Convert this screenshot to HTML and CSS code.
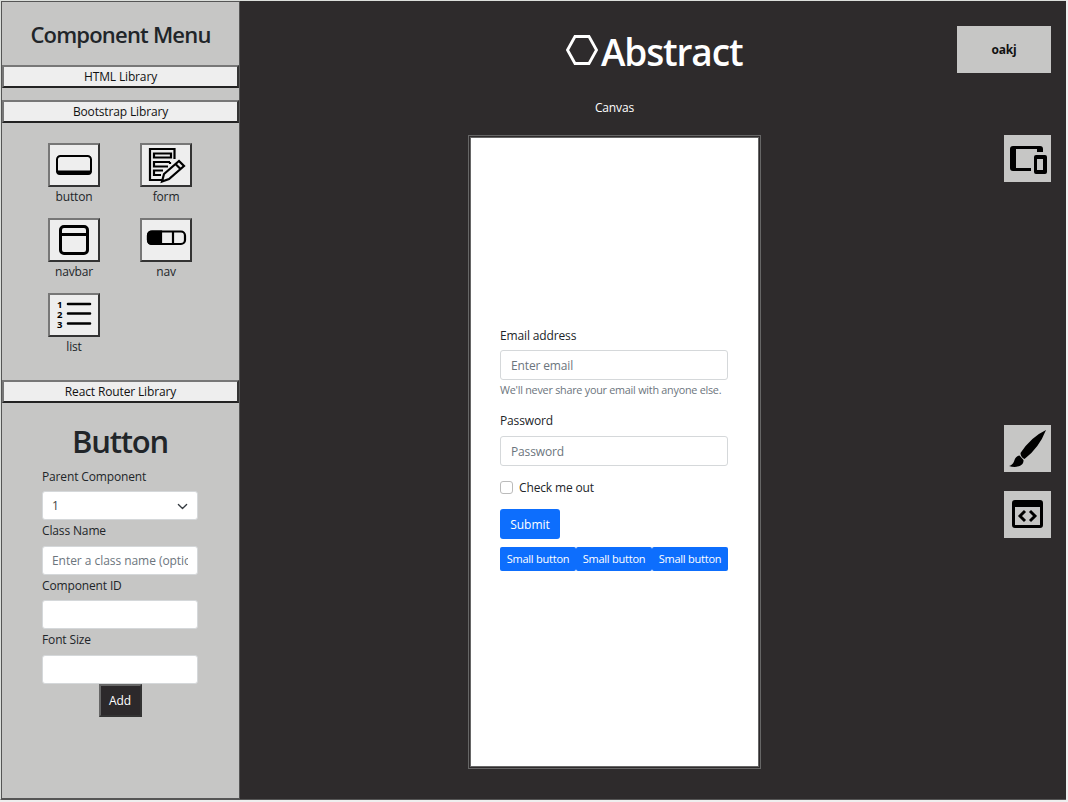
FILE: index.html
```html
<!DOCTYPE html>
<html lang="en">
<head>
<meta charset="utf-8">
<title>Abstract</title>
<link rel="stylesheet" href="styles.css">
</head>
<body>
<div class="app">
  <aside class="sidebar">
    <h2 class="menu-title"><span>Component Menu</span></h2>
    <button class="library"><span>HTML Library</span></button>
    <button class="library library-bootstrap"><span>Bootstrap Library</span></button>
    <div class="components">
      <div class="component"><button class="tile"><svg width="46" height="40" viewBox="0 0 46 40"><rect x="6" y="11" width="34" height="17.500" rx="3.500" fill="none" stroke="#000" stroke-width="2"/><path d="M5 25.500h36q0 4.500-4 4.500H9q-4 0-4-4.500z"/></svg></button><span>button</span></div>
      <div class="component"><button class="tile"><svg width="46" height="40" viewBox="0 0 46 40" fill="none" stroke="#000" stroke-width="2.200"><path d="M31.500 14V4H7v31h12M11 8.500h17v4H11zM27 17H11v4.500h14M20 25.500h-9V30h7M27 17v2"/><path fill="#eee" d="m19 36.500 2-7.500 15-13 5 5-15 13zM32.500 19l5 5"/></svg></button><span>form</span></div>
      <div class="component"><button class="tile"><svg width="46" height="40" viewBox="0 0 46 40" fill="none" stroke="#000" stroke-width="3"><rect x="9.500" y="6.500" width="27" height="27" rx="3.500"/><path d="M9 14.500h28"/></svg></button><span>navbar</span></div>
      <div class="component"><button class="tile"><svg width="46" height="40" viewBox="0 0 46 40" fill="none" stroke="#000" stroke-width="2.200"><rect x="5" y="11.500" width="37" height="12.500" rx="4"/><path fill="#000" d="M18 11.500H9q-4 0-4 4V20q0 4 4 4h9z"/><path d="M30 11.500V24"/></svg></button><span>nav</span></div>
      <div class="component"><button class="tile"><svg width="46" height="40" viewBox="0 0 46 40"><path d="M17 9h22M17 18.500h22M17 28.500h22" stroke="#000" stroke-width="2.600" stroke-linecap="round"/><g class="list-number"><text x="6" y="12.500">1</text><text x="6" y="22.500">2</text><text x="6" y="32.500">3</text></g></svg></button><span>list</span></div>
    </div>
    <button class="library"><span>React Router Library</span></button>
    <form class="properties">
      <h1 class="properties-title"><span>Button</span></h1>
      <label class="prop-label"><span>Parent Component</span></label>
      <div class="field prop-select"><span>1</span><svg width="11" height="11" viewBox="0 0 16 16"><path d="m2 5 6 6 6-6" fill="none" stroke="#343a40" stroke-width="1.900" stroke-linecap="round" stroke-linejoin="round"/></svg></div>
      <label class="prop-label"><span>Class Name</span></label>
      <div class="field placeholder"><span class="clip">Enter a class name (optional)</span></div>
      <label class="prop-label"><span>Component ID</span></label>
      <div class="field"></div>
      <label class="prop-label"><span>Font Size</span></label>
      <div class="field"></div>
      <button class="add" type="button">Add</button>
    </form>
  </aside>
  <main class="workspace">
    <header class="brand"><svg width="32" height="32" viewBox="0 0 32 32"><path d="M9 2.500h14L30.500 16 23 29.500H9L1.500 16z" fill="none" stroke="#fff" stroke-width="2.800"/></svg><span>Abstract</span></header>
    <p class="canvas-label">Canvas</p>
    <section class="canvas">
      <label class="form-label email-label"><span>Email address</span></label>
      <div class="field bordered placeholder"><span>Enter email</span></div>
      <small class="hint"><span>We'll never share your email with anyone else.</span></small>
      <label class="form-label"><span>Password</span></label>
      <div class="field bordered placeholder"><span>Password</span></div>
      <label class="check"><i class="box"></i><span>Check me out</span></label>
      <button class="submit">Submit</button>
      <div class="small-row"><button class="small"><span>Small button</span></button><button class="small"><span>Small button</span></button><button class="small"><span>Small button</span></button></div>
    </section>
  </main>
  <nav class="tools">
    <button class="user">oakj</button>
    <button class="tool devices"><svg width="47" height="47" viewBox="0 0 47 47"><path d="M39 17v-3q0-3-3-3H9q-3 0-3 3v19q0 3 3 3h18v-3H12V14h21v3z"/><path fill-rule="evenodd" d="M32 20h9q2 0 2 2v15q0 2-2 2h-9q-2 0-2-2V22q0-2 2-2zm1 4v11h6V24z"/></svg></button>
    <button class="tool brush"><svg width="47" height="47" viewBox="0 0 47 47"><path d="M42 5Q27 12 16.500 28q0 4 4 6Q35 23 42 5zM15.500 30.500c-4 1-4.500 3-5.500 6-1 2.500-3 4-5 4.500 6 2 15 1 14.500-6z"/></svg></button>
    <button class="tool"><svg width="47" height="47" viewBox="0 0 47 47"><path fill-rule="evenodd" d="M11 9h25q3 0 3 3v22q0 3-3 3H11q-3 0-3-3V12q0-3 3-3zm0 7v18h25V16z"/><path d="m21 20-5 5 5 5M26 20l5 5-5 5" fill="none" stroke="#000" stroke-width="2.900"/></svg></button>
  </nav>
</div>
</body>
</html>
```
FILE: styles.css
```css
* { box-sizing: border-box; }
body { margin: 0; background: #efefef; color: #212529; font: 12px/18px "Open Sans", sans-serif; letter-spacing: -.14px; }
button { font: inherit; letter-spacing: inherit; padding: 0; color: inherit; }
svg { display: block; flex: none; }
h1, h2, p { margin: 0; }
.app { width: 1066px; height: 800px; display: flex; background: #2e2b2c; border-top: 1px solid #dcdfdc; border-left: 1px solid #dcdfdc; border-bottom: 1px solid #555; }
.sidebar { width: 239px; flex: none; background: #c6c6c5; border: 1px solid #555; display: flex; flex-direction: column; }
.menu-title { height: 63px; padding-top: 19px; text-align: center; font-size: 22px; line-height: 27px; font-weight: 600; letter-spacing: -.8px; }
.library { flex: none; height: 23px; display: block; width: 100%; background: #eee; border: 2px solid; border-color: #777 #333 #222 #777; color: #111; line-height: 18px; }
.library-bootstrap { margin-top: 12px; }
.components { height: 257px; display: grid; grid-template-columns: 92px 92px; grid-auto-rows: 75px; justify-content: center; align-content: start; padding: 20px 1px 0 0; }
.component { display: flex; flex-direction: column; align-items: center; line-height: 20px; }
.tile { width: 52px; height: 44px; background: #eee; border: 2px solid; border-color: #777 #333 #333 #777; display: flex; align-items: center; justify-content: center; }
.list-number { font: bold 9.5px/9px "Open Sans", sans-serif; letter-spacing: 0; }
.properties { padding: 17px 41px 0 40px; }
.properties-title { font-size: 31px; line-height: 42px; height: 45.500px; font-weight: 600; text-align: center; letter-spacing: -1.2px; }
.prop-label { display: block; height: 25.600px; line-height: 22px; }
.field { height: 29px; background: #fff; border: 1px solid #d5d8da; border-radius: 3px; padding: 1px 9px 0; display: flex; align-items: center; color: #444; }
.bordered { height: 30px; padding: 2px 10px 0; }
.prop-select { justify-content: space-between; }
.placeholder { color: #6c757d; }
.clip { overflow: hidden; white-space: nowrap; letter-spacing: -.05px; }
.add { display: block; width: 43px; height: 33px; margin: 0 auto; background: #2c292b; color: #fff; border: 2px solid; border-color: #666 #333 #333 #666; font-weight: 500; padding-top: 1px; }
.workspace { width: 293px; margin-left: 228px; color: #fff; }
.brand { display: flex; align-items: center; height: 100px; padding-left: 98px; font-size: 37px; font-weight: 600; letter-spacing: -1.15px; gap: 3px; }
.brand span { padding-top: 1px; }
.brand svg { margin-bottom: 3px; }
.canvas-label { text-align: center; height: 34px; line-height: 13px; }
.canvas { height: 634px; background: #fff; background-clip: padding-box; color: #212529; border: 3px double #666; padding: 189px 30px 0 29px; }
.form-label { display: block; height: 24px; line-height: 18px; }
.email-label { height: 23px; }
.hint { display: block; height: 32px; font-size: 10.800px; line-height: 20px; letter-spacing: -.24px; color: #6c757d; white-space: nowrap; }
.check { height: 43px; display: flex; align-items: center; gap: 6px; }
.box { width: 13px; height: 13px; border: 1px solid #bbb; border-radius: 3px; }
.submit { display: block; width: 60px; height: 30px; background: #0d6efd; border: 0; border-radius: 3px; color: #fff; letter-spacing: 0; padding-top: 1px; }
.small-row { display: flex; margin-top: 8px; }
.small { flex: 1; height: 24px; background: #0d6efd; border: 0; border-radius: 2px; color: #fff; font-size: 11px; letter-spacing: -.23px; white-space: nowrap; }
.tools { margin-left: auto; padding: 25px 15px 0 0; display: flex; flex-direction: column; align-items: flex-end; }
.user, .tool { height: 47px; background: #c6c6c5; border: 0; color: #111; }
.user { width: 94px; font-weight: 700; letter-spacing: -.2px; }
.tool { width: 47px; }
.devices { margin-top: 62px; }
.brush { margin: 243px 0 19px; }
```
